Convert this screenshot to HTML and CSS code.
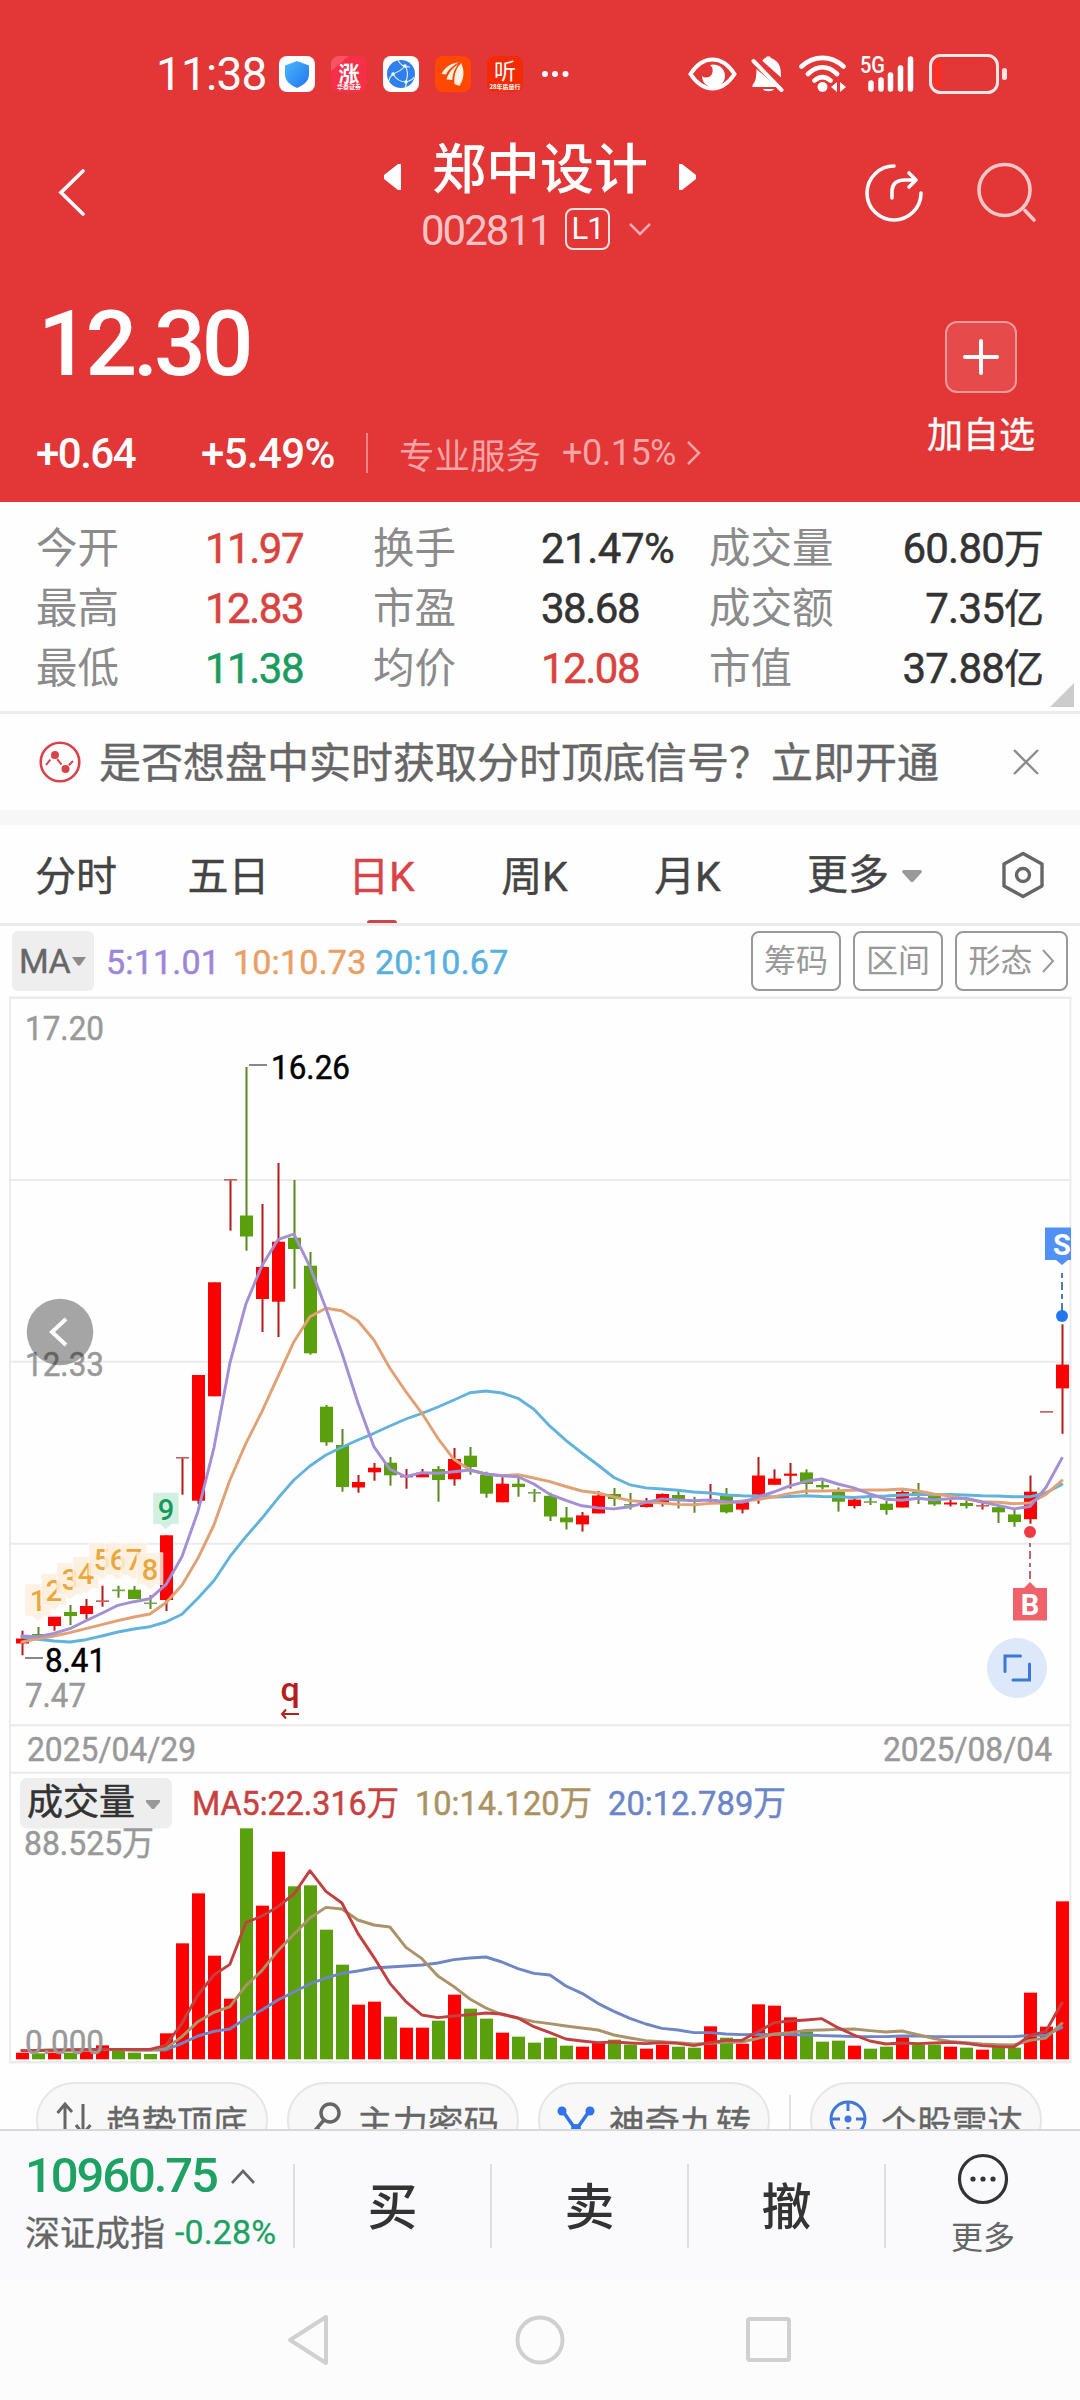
FILE: index.html
```html
<!DOCTYPE html>
<html lang="zh-CN">
<head>
<meta charset="utf-8">
<title>郑中设计 002811</title>
<link rel="stylesheet" href="styles.css">
</head>
<body>
<div class="screen">
  <header class="hero">
    <div class="status">
      <span class="clock">11:38</span>
      <div class="apps">
        <svg class="app" viewBox="0 0 36 36"><defs><linearGradient id="sh" x1="0" y1="0" x2="1" y2="1"><stop offset="0" stop-color="#4cb8f8"/><stop offset="1" stop-color="#1f74f2"/></linearGradient></defs><rect width="36" height="36" rx="8" fill="#fff"/><path d="M18 5 30 9.500V18c0 7-5 11-12 14C11 29 6 25 6 18V9.500Z" fill="url(#sh)"/></svg>
        <svg class="app" viewBox="0 0 36 36"><rect width="36" height="36" rx="8" fill="#f7304a"/><path d="M0 15V8a8 8 0 0 1 8-8h10Z" fill="#fa5265"/><text x="18" y="24.500" class="app-word" font-size="21" font-weight="700">涨</text><text x="18" y="33" class="app-word" font-size="6" font-weight="700">华泰证券</text></svg>
        <svg class="app" viewBox="0 0 36 36"><rect width="36" height="36" rx="8" fill="#fff"/><circle cx="18" cy="18" r="14" fill="#2f7fec"/><path d="M15 4C17 9 21 11 27 11M10 18C15 16 19 14 22 10M10 18C13 23 18 26 23 26M23 26C25 20 25 14 22 10M10 18C7 21 6 23 6 25M23 26C24 28 23 30 22 32M23 26C27 25 30 23 31 21" stroke="#d8ebff" stroke-width="1.200" fill="none"/><g fill="#fff"><circle cx="22" cy="10" r="1.700"/><circle cx="10" cy="18" r="1.700"/><circle cx="23" cy="26" r="1.700"/></g></svg>
        <svg class="app" viewBox="0 0 36 36"><rect width="36" height="36" rx="8" fill="#ff4800"/><path d="M6.500 18C10 11 16 7 24 6.500 17 10 13 14 11 18.500ZM11.500 23.500C14 15 18 9.500 25 6.500 20 13 18 18 17.500 24ZM19.500 28C18.500 20 21 12 26 6.500 30 15 29 23 24.500 30Z" fill="#fff1df"/><path d="M12 19.500C15 14 19 10 24 7M18 25.500C18 18 21 11 25.500 7" stroke="#ff4800" stroke-width="1.300" fill="none"/></svg>
        <svg class="app" viewBox="0 0 36 36"><rect width="36" height="36" rx="8" fill="#f32a06"/><text x="18" y="23" class="app-word" font-size="22">听</text><text x="18" y="32.500" class="app-word" font-size="6" font-weight="700">28年质量行</text></svg>
      </div>
      <svg class="dots" viewBox="0 0 28 8"><g fill="#fff"><circle cx="4" cy="4" r="3"/><circle cx="14" cy="4" r="3"/><circle cx="24.500" cy="4" r="3"/></g></svg>
      <div class="signals">
        <svg width="50" height="44" viewBox="689 51 50 44"><path d="M691.500 73C698 63 706 58.500 713.500 58.500S729 63 735.500 73C729 83 721 87.500 713.500 87.500S698 83 691.500 73Z" fill="none" stroke="#fff" stroke-width="4"/><path d="M711 64A11.500 11.500 0 1 1 703 75C706 77.500 711 77 713 73 714.500 69 713.500 66 711 64Z" fill="#fff"/></svg>
        <svg width="35" height="44" viewBox="752 51 35 44"><g fill="#fff"><path d="M764 58.500C766 57 767 57 767.500 55.500H771C771.500 57 773 57.500 775 58.500 781 62 782 67 782 76.500L763.500 60ZM757.500 68 778 86H753.500V84C756 81 757.500 78 757.500 68ZM764 88H775C774 91 765 91 764 88Z"/></g><path d="M754.500 60 782.500 89" stroke="#fff" stroke-width="4" stroke-linecap="round"/></svg>
        <svg width="48" height="44" viewBox="799 51 48 44"><g fill="none" stroke="#fff" stroke-width="4.600" stroke-linecap="round"><path d="M801.500 65.500C814 54 831 54 843.500 65.500M808 73C817 64 828 64 837 73M814.500 79.500C820 75 825 75 830.500 79.500"/></g><circle cx="822.500" cy="86" r="5" fill="#fff"/><path d="M837 81V91L831 86ZM840 81V91L846 86Z" fill="#fff"/></svg>
        <svg width="56" height="44" viewBox="860 51 56 44"><text x="860" y="72" textLength="25" lengthAdjust="spacingAndGlyphs" class="five-g">5G</text><path d="M871 82V88M881 79V88M890.500 74V88M900.500 67V88M910.500 58V88" stroke="#fff" stroke-width="5.500" stroke-linecap="round"/></svg>
        <svg width="80" height="44" viewBox="928 51 80 44"><rect x="929.500" y="54.500" width="67" height="37" rx="10" fill="none" stroke="#fff" stroke-opacity=".88" stroke-width="3"/><rect x="934" y="60" width="6" height="26" rx="2" fill="#ff2d20"/><rect x="1001" y="67" width="5" height="12" rx="2.500" fill="#fff" fill-opacity=".88"/></svg>
      </div>
    </div>

    <div class="titlebar">
      <svg class="back" viewBox="0 0 30 50"><path d="M26 3 4 24.500 26 46" fill="none" stroke="#fff" stroke-width="3.600" stroke-linecap="round"/></svg>
      <div class="heading">
        <div class="name-row">
          <svg width="20" height="28" viewBox="0 0 20 28"><path d="M18 1V27H15L1 16V12L15 1Z" fill="#fff"/></svg>
          <h1>郑中设计</h1>
          <svg width="20" height="28" viewBox="0 0 20 28"><path d="M2 1V27H5L19 16V12L5 1Z" fill="#fff"/></svg>
        </div>
        <div class="code-row">
          <span class="code">002811</span><span class="level">L1</span>
          <svg width="24" height="14" viewBox="0 0 24 14"><path d="M2 2 12 12 22 2" fill="none" stroke="#f7abac" stroke-width="2.500"/></svg>
        </div>
      </div>
      <svg class="share" viewBox="864 163 60 60"><g fill="none" stroke="#fff" stroke-width="3.600" stroke-linecap="round" stroke-linejoin="round"><path d="M894 166A27 27 0 1 0 921 193M892 198V190Q893 180 905 180H915M909 173 916 180 909 187"/></g></svg>
      <svg class="search" viewBox="974 160 66 66"><g fill="none" stroke="#fcc7c7" stroke-width="3.600" stroke-linecap="round"><circle cx="1004.500" cy="190" r="25.500"/><path d="M1025 210.500 1034 220"/></g></svg>
    </div>

    <div class="quote">
      <div class="quote-main">
        <div class="price">12.30</div>
        <div class="change-row">
          <span class="chg">+0.64</span><span class="pct">+5.49%</span><i class="rule"></i>
          <span class="sector">专业服务</span><span class="sector-pct">+0.15%</span>
          <svg width="16" height="26" viewBox="0 0 16 26"><path d="M2 2 13 13 2 24" fill="none" stroke="#f7a2a3" stroke-width="2.500"/></svg>
        </div>
      </div>
      <div class="add">
        <span class="add-box"><svg width="36" height="36" viewBox="0 0 36 36"><path d="M18 2V34M2 18H34" stroke="#fff" stroke-width="4" stroke-linecap="round"/></svg></span>
        <span class="add-label">加自选</span>
      </div>
    </div>
  </header>

  <section class="stats">
    <span>今开</span><b class="up">11.97</b><span>换手</span><b>21.47%</b><span>成交量</span><b class="end">60.80<em>万</em></b>
    <span>最高</span><b class="up">12.83</b><span>市盈</span><b>38.68</b><span>成交额</span><b class="end">7.35<em>亿</em></b>
    <span>最低</span><b class="down">11.38</b><span>均价</span><b class="up">12.08</b><span>市值</span><b class="end">37.88<em>亿</em></b>
    <i class="corner"></i>
  </section>

  <section class="notice">
    <svg width="42" height="42" viewBox="0 0 42 42"><circle cx="21" cy="21" r="19.300" fill="none" stroke="#d8434a" stroke-width="2.600"/><path d="M7 24 15 14 26 28 34 20" fill="none" stroke="#d8434a" stroke-width="2" stroke-dasharray="7 2"/><circle cx="16" cy="14" r="4" fill="#d8434a"/><circle cx="26.500" cy="28" r="4" fill="#d8434a"/></svg>
    <p>是否想盘中实时获取分时顶底信号？立即开通</p>
    <svg width="28" height="28" viewBox="0 0 28 28"><path d="M2 2 26 26M26 2 2 26" stroke="#8c8c8c" stroke-width="2.400"/></svg>
  </section>

  <nav class="tabs">
    <span>分时</span><span>五日</span><span class="on">日K</span><span>周K</span><span>月K</span>
    <span class="more">更多<svg width="22" height="14" viewBox="0 0 22 14"><path d="M2 1H20L21 3 12 13H10L1 3Z" fill="#999"/></svg></span>
    <svg class="hex" width="46" height="50" viewBox="1000 850 46 50"><path d="M1023 853.500 1042 864V886L1023 896.500 1004 886V864Z" fill="none" stroke="#666" stroke-width="3.400" stroke-linejoin="round"/><circle cx="1023" cy="875" r="6.500" fill="none" stroke="#666" stroke-width="3.400"/></svg>
  </nav>

  <div class="ma-bar">
    <span class="ma-pick">MA<svg width="14" height="10" viewBox="0 0 14 10"><path d="M0 1H14L8 9.500H6Z" fill="#8c8c8c"/></svg></span>
    <span class="ma5">5:11.01</span><span class="ma10">10:10.73</span><span class="ma20">20:10.67</span>
    <span class="tool push">筹码</span><span class="tool">区间</span><span class="tool wide">形态<svg width="14" height="26" viewBox="0 0 14 26"><path d="M2 2 12 13 2 24" fill="none" stroke="#999" stroke-width="2"/></svg></span>
  </div>

  <svg class="chart" id="chart" viewBox="0 996 1080 1070"></svg>

  <div class="chips">
    <span class="chip"><svg width="36" height="36" viewBox="0 0 36 36"><path d="M9 33V4M1.500 12 9 3 16 11M27 3V32M20 24 27 33 34.500 24" fill="none" stroke="#666" stroke-width="3"/></svg>趋势顶底</span>
    <span class="chip"><svg width="36" height="36" viewBox="0 0 36 36"><circle cx="23" cy="12" r="9" fill="none" stroke="#666" stroke-width="3.500"/><path d="M17 19 4 34M10 27 16 33" stroke="#666" stroke-width="3.500"/></svg>主力密码</span>
    <span class="chip"><svg width="38" height="36" viewBox="0 0 38 36"><path d="M5 9 19 29 33 9" fill="none" stroke="#2f74e8" stroke-width="3.500"/><g fill="#2f74e8"><circle cx="5" cy="10" r="4.500"/><circle cx="33" cy="10" r="4.500"/><circle cx="19" cy="28" r="5"/></g></svg>神奇九转</span>
    <i></i>
    <span class="chip"><svg width="38" height="38" viewBox="0 0 38 38"><circle cx="19" cy="19" r="17" fill="none" stroke="#3f78d8" stroke-width="3"/><circle cx="19" cy="19" r="3.500" fill="#3f78d8"/><path d="M19 2V11M19 27V36M2 19H11M27 19H36" stroke="#3f78d8" stroke-width="3"/></svg>个股雷达</span>
  </div>

  <footer class="trade">
    <div class="index">
      <div class="index-value">10960.75<svg width="26" height="18" viewBox="0 0 26 18"><path d="M2 16 13 4 24 16" fill="none" stroke="#666" stroke-width="2.600"/></svg></div>
      <div class="index-name">深证成指<span>-0.28%</span></div>
    </div>
    <button>买</button><button>卖</button><button>撤</button>
    <div class="more-act"><svg width="52" height="52" viewBox="0 0 52 52"><circle cx="26" cy="26" r="23.500" fill="none" stroke="#333" stroke-width="3.200"/><g fill="#333"><circle cx="16" cy="26" r="2.600"/><circle cx="26" cy="26" r="2.600"/><circle cx="36" cy="26" r="2.600"/></g></svg><span>更多</span></div>
  </footer>

  <div class="sysnav">
    <svg width="48" height="54" viewBox="0 0 48 54"><path d="M41 4 5 27 41 50Z" fill="none" stroke="#d0d0d0" stroke-width="4" stroke-linejoin="round"/></svg>
    <svg width="54" height="54" viewBox="0 0 54 54"><circle cx="27" cy="27" r="22.500" fill="none" stroke="#d0d0d0" stroke-width="4"/></svg>
    <svg width="54" height="54" viewBox="0 0 54 54"><rect x="6" y="6" width="41" height="41" rx="2" fill="none" stroke="#d0d0d0" stroke-width="4"/></svg>
  </div>
</div>
<script src="chart.js"></script>
</body>
</html>
```

FILE: styles.css
```css
* { box-sizing: border-box; }
body { margin: 0; background: #fff; font-family: Roboto, "Noto Sans CJK SC", sans-serif; }
svg { display: block; flex: none; }
h1, p { margin: 0; }
i, em { font-style: normal; }

.screen { width: 1080px; height: 2400px; overflow: hidden; display: flex; flex-direction: column; background: #fefefe; }
.screen > * { flex: none; }

.hero { height: 502px; background: #e23637; color: #fff; }

.status { height: 125px; padding: 22px 71px 0 156px; display: flex; align-items: center; }
.clock { width: 123px; font-size: 46px; letter-spacing: -.800px; }
.apps { display: flex; gap: 16px; }
.app { width: 36px; height: 36px; }
.app-word { fill: #fff; text-anchor: middle; font-family: "Noto Sans CJK SC", sans-serif; }
.dots { width: 28px; height: 8px; margin-left: 18px; }
.signals { margin-left: auto; display: flex; gap: 13px; }
.five-g { font-size: 24px; font-weight: 500; fill: #fff; }

.titlebar { height: 145px; padding-left: 57px; display: flex; }
.back { width: 30px; height: 50px; margin-top: 43px; }
.heading { width: 777px; padding: 13px 0 0 167px; display: flex; flex-direction: column; align-items: flex-start; }
.name-row { width: 314px; height: 66px; margin-left: 129px; display: flex; align-items: center; justify-content: space-between; }
.name-row svg { margin-top: 12px; }
.name-row h1 { font-size: 54px; line-height: 66px; font-weight: 500; }
.code-row { height: 50px; margin-left: 166px; display: flex; align-items: center; }
.code { width: 145px; padding: 2px 0 0 1px; font-size: 42px; letter-spacing: -2px; color: #fbc3c3; }
.level { width: 45px; height: 42px; margin-right: 18px; border: 2px solid #fde0e0; border-radius: 8px; font-size: 31px; line-height: 38px; letter-spacing: -1px; text-align: center; }
.share { width: 60px; height: 60px; margin-top: 38px; }
.search { width: 66px; height: 66px; margin: 35px 0 0 50px; }

.quote { height: 232px; display: flex; justify-content: space-between; padding: 0 41px 0 36px; }
.price { height: 142px; padding: 21px 0 0 2px; font-size: 91px; line-height: 106px; font-weight: 500; letter-spacing: -4.200px; }
.change-row { display: flex; align-items: center; height: 82px; }
.chg, .pct { font-size: 42px; letter-spacing: -1.500px; font-weight: 500; }
.chg { width: 165px; }
.pct { width: 165px; letter-spacing: -.600px; }
.rule { width: 2px; height: 40px; background: #ef8586; margin-right: 31px; }
.sector { width: 163px; font-size: 35.500px; color: #f9a4a5; }
.sector-pct { width: 124px; font-size: 36px; letter-spacing: -.500px; color: #f9a4a5; }
.add { width: 116px; display: flex; flex-direction: column; align-items: center; padding-top: 51px; }
.add-box { width: 72px; height: 72px; border: 2px solid #f19a9b; border-radius: 12px; background: #e64a4b; display: grid; place-items: center; }
.add-label { font-size: 36px; line-height: 50px; margin-top: 18px; white-space: nowrap; -webkit-text-stroke: .4px currentColor; }

.stats { position: relative; height: 212px; padding: 17px 36px 0; border-bottom: 3px solid #ececee; display: grid; grid-template-columns: 169px 168px 168px 168px 154px 1fr; grid-auto-rows: 60px; line-height: 60px; align-content: start; }
.stats span { font-size: 41.500px; color: #8b8b8b; }
.stats b { font-size: 42px; font-weight: 400; letter-spacing: -1.500px; color: #333; white-space: nowrap; -webkit-text-stroke: .5px currentColor; }
.stats b:nth-child(4) { letter-spacing: -.500px; }
.stats em { font-size: 40px; letter-spacing: 0; }
.stats .up { color: #d9433f; }
.stats .down { color: #1a9c60; }
.stats .end { text-align: right; letter-spacing: -.800px; }
.corner { position: absolute; right: 6px; bottom: 4px; border-left: 24px solid transparent; border-bottom: 24px solid #ccc; }

.notice { height: 111px; padding: 0 40px 15px 39px; display: flex; align-items: center; background: linear-gradient(#fefefe 96px, #f7f7f8 96px); }
.notice p { margin: 0 auto 0 18px; padding-top: 3px; font-size: 42px; line-height: 60px; color: #666; white-space: nowrap; -webkit-text-stroke: .4px currentColor; }

.tabs { height: 101px; padding-top: 3px; display: flex; align-items: center; border-bottom: 3px solid #ebebeb; color: #444; font-size: 41px; }
.tabs > span { width: 153px; height: 95px; line-height: 99px; text-align: center; -webkit-text-stroke: .4px currentColor; }
.tabs > span:first-child { width: 152px; }
.tabs .on { color: #dc4249; display: flex; flex-direction: column; align-items: center; }
.tabs .on::after { content: ""; width: 30px; height: 5px; border-radius: 3px 3px 0 0; background: #cf444b; margin-top: -7px; }
.tabs .more { width: 236px; display: flex; align-items: center; gap: 12px; padding-left: 43px; }
.tabs .hex { margin-bottom: 2px; }

.ma-bar { height: 70px; padding: 0 12px; display: flex; align-items: center; font-size: 34px; }
.ma-pick { width: 82px; height: 60px; border-radius: 6px; background: #eee; color: #666; display: flex; align-items: center; gap: 2px; padding-left: 7px; letter-spacing: -.500px; margin-right: 12px; -webkit-text-stroke: .4px currentColor; }
.ma5 { width: 127px; color: #9d86d8; }
.ma10 { width: 142px; color: #e8a064; }
.ma20 { color: #57b0de; }
.ma5, .ma10, .ma20 { padding-top: 2px; letter-spacing: .200px; -webkit-text-stroke: .5px currentColor; }
.tool { width: 90px; height: 60px; border: 2px solid #999; border-radius: 8px; color: #999; font-size: 32px; line-height: 50px; padding-bottom: 1px; display: flex; align-items: center; justify-content: center; margin-left: 12px; white-space: nowrap; }
.push { margin-left: auto; }
.wide { width: 113px; gap: 8px; }

.chart { width: 1080px; height: 1070px; }
.chart text { font-size: 34px; }
.chart .value { stroke-width: .5px; }
.chart .tag { font-size: 29px; font-weight: 500; text-anchor: middle; }
.chart .flag { font-size: 29px; font-weight: 700; text-anchor: middle; fill: #fff; }

.chips { height: 63px; padding: 16px 36px 0; display: flex; overflow: hidden; }
.chip { width: 232px; height: 76px; flex: none; border: 2px solid #e6e6e6; border-radius: 38px; background: #f8f8f8; color: #666; font-size: 35.500px; display: flex; align-items: center; justify-content: center; gap: 14px; margin-right: 19px; white-space: nowrap; -webkit-text-stroke: .3px currentColor; }
.chip:last-child { margin-right: 0; }
.chip svg { margin-top: -2px; }
.chips i { width: 2px; height: 60px; margin: 13px 19px 0 0; background: #e2e2e2; }

.trade { height: 151px; border-top: 2px solid #d8d8da; background: #fafafc; display: flex; align-items: center; }
.index { width: 293px; padding-left: 25px; }
.index-value { display: flex; align-items: center; gap: 13px; height: 60px; margin-top: -10px; font-size: 49px; font-weight: 500; letter-spacing: -2.100px; color: #1ea263; }
.index-name { display: flex; align-items: center; gap: 10px; height: 50px; font-size: 35px; color: #666; white-space: nowrap; -webkit-text-stroke: .3px currentColor; }
.index-name span { padding-top: 3px; font-size: 34px; letter-spacing: .100px; color: #1ea263; }
.trade button { width: 197px; height: 84px; padding: 0 0 6px; border: 0; border-left: 2px solid #dedee0; background: none; font: 500 50px/78px "Noto Sans CJK SC", sans-serif; color: #333; }
.more-act { width: 196px; height: 84px; border-left: 2px solid #dedee0; display: flex; flex-direction: column; align-items: center; justify-content: center; font-size: 32px; line-height: 40px; color: #666; gap: 13px; }

.sysnav { height: 120px; background: #fcfcfc; display: flex; align-items: center; justify-content: center; }
.sysnav svg:nth-child(1) { margin-right: 180px; }
.sysnav svg:nth-child(3) { margin-left: 175px; }
```

FILE: chart.js
```js
const RED = '#ff0000', GREEN = '#5aa00c';
const xAt = i => 22.5 + i * 16;

// [direction, high, low, body top, body bottom]
const candles = [
  ['r',1630.7,1655.3,1638.5,1643.5],['g',1627,1635.5,1634,1636],['r',1617,1630.7,1616.7,1626],['g',1605,1625,1612,1616],
  ['r',1599,1619,1606,1614],['r',1585.7,1606.7,1600.3,1602],['g',1585.7,1597.7,1589.5,1591.2],['g',1586,1599,1589.7,1599],
  ['g',1595,1609,1602.5,1604],['r',1535.3,1611,1535.3,1600],['r',1457.7,1494.7,1457,1458.6],['r',1375,1504,1375,1500.7],
  ['r',1282.3,1396.3,1282.3,1396.3],['r',1179.7,1230.7,1179,1180.6],['g',1067,1250.7,1215.5,1236.5],['r',1204,1332,1267,1299],
  ['r',1163,1337,1241.7,1301.7],['g',1180,1288.7,1237.7,1249],['g',1252,1354.7,1265.7,1353.3],['g',1405,1445.7,1406.7,1442.3],
  ['g',1429,1491.7,1445,1487],['r',1475,1492.7,1482,1487.5],['r',1463,1480.7,1467.7,1472.3],['g',1457,1485.7,1462.7,1475.3],
  ['r',1469,1488.7,1476,1477.5],['r',1469,1477,1472.7,1477.3],['g',1466,1501.7,1469,1480],['r',1448,1485.7,1459,1479.3],
  ['g',1447,1474.7,1455.7,1467],['g',1471.7,1497.7,1474.7,1493.7],['r',1476.7,1502.3,1483.7,1502.3],['g',1478,1496.7,1483.7,1487],
  ['g',1489,1502,1492,1493.6],['g',1492.7,1521,1495.8,1516.5],['g',1507,1529.5,1517.5,1522.3],['r',1512,1531.6,1515.4,1524.4],
  ['r',1491,1513.4,1495.5,1513.4],['g',1488,1506,1494,1499],['g',1493,1509.6,1504,1505.6],['r',1498,1507.5,1503,1507],
  ['r',1493.4,1506.5,1494,1503.7],['g',1491,1508.5,1495,1499],['g',1496.8,1512.7,1500.5,1502],['r',1484,1502,1499,1501],
  ['g',1488,1513.4,1496,1512.3],['r',1501.7,1513.4,1502.3,1509.6],['r',1457,1503.7,1475.5,1494.8],['r',1469.3,1484.8,1478.6,1484.8],
  ['r',1463,1488.6,1473.6,1475.8],['g',1469.3,1494,1472.4,1484],['g',1480.6,1489.3,1485,1487.3],['g',1487.5,1511.6,1492,1501.7],
  ['r',1498,1508.5,1499.6,1506],['g',1498,1505,1501.2,1502.8],['g',1501,1514.7,1503.7,1510],['r',1490,1507.5,1492,1507.5],
  ['g',1483,1504,1492,1495],['g',1495.5,1505.8,1496,1504.4],['r',1499.6,1506.5,1502.5,1504.5],['g',1500.3,1508.5,1503,1506],
  ['r',1502.3,1509.6,1505,1506.6],['g',1505.8,1523,1507.2,1512.3],['g',1510,1526.8,1514.4,1522],['r',1475.5,1523.7,1491.7,1519.2],
  ['r',1411.8,1411.8,1411,1412.7],['r',1324.3,1433.8,1364.6,1388.4]
];

const ma5 = [1636,1636.7,1633.3,1628.7,1620.7,1613.3,1605.3,1601.7,1598.7,1584.7,1556.7,1511.7,1448,1363,1304,1265.7,1239.7,1234,1266.7,1308.3,1353,1402.7,1446.7,1469.3,1476.7,1472.7,1473.3,1471.7,1470,1474,1475.7,1476.7,1484,1494.4,1500.3,1505.8,1507.9,1508.9,1506.8,1502.3,1498.9,1500,1500.6,1500,1501.7,1502.3,1496.8,1492,1485.8,1481.3,1479,1484,1487.9,1494,1499.2,1500.3,1498.2,1500,1498.6,1498.2,1502,1505.4,1508.9,1506.5,1487.5,1458.3];
const ma10 = [1642,1638.7,1636,1632.7,1628.7,1624.7,1620.7,1617,1614,1602.7,1585.3,1558.3,1525,1480,1443.3,1411.7,1376.7,1341.7,1316.7,1308.3,1310.7,1320.7,1340,1368.3,1391.7,1413.3,1438.3,1459.3,1470,1474,1475.7,1474.7,1478,1481.7,1486.5,1491,1493,1496.8,1500.6,1502,1503,1504.4,1504.8,1503.4,1503,1501,1499.6,1496.8,1493.4,1491,1491,1490.6,1490.3,1490,1490,1489,1491,1494,1496,1499,1501.7,1502.3,1503.7,1503,1494.4,1480.6];
const ma20 = [1637,1639.3,1641,1642,1639.7,1636,1632,1629,1626.7,1622,1614.3,1598.3,1580.7,1556.7,1536.7,1518.3,1498.3,1480,1466,1455,1447.3,1440,1433.3,1426,1419,1413.3,1407,1400,1392.7,1391,1393,1398.3,1409.3,1426.2,1440.4,1453,1465,1477.5,1484.8,1487.9,1489,1490.3,1492,1493,1495,1495.8,1496,1497,1496.5,1495.8,1496.5,1496.8,1497.5,1496.5,1496,1495,1494.4,1494.8,1494.4,1495,1495.8,1496,1496.8,1496.8,1492.7,1484.4];

// volume series, in thirds of a pixel below y = 1720
const vols = [998,1000,998,998,994,976,992,998,1002,940,670,520,707,836,325,557,395,499,496,629,734,854,845,890,923,923,902,824,866,896,938,950,968,953,977,980,968,959,974,986,974,980,983,919,953,971,853,857,892,934,965,962,977,986,980,952,974,974,980,983,989,980,983,818,920,544];
const v5 = [992,992,991,990,989,988,988,988,988,976,910,825,765,733,608,588,560,522,452,514,549,640,712,790,845,885,893,888,884,879,882,894,920,938,957,963,968,966,969,971,968,970,977,968,961,961,935,908,903,900,896,923,945,963,972,969,971,969,967,970,977,980,981,946,934,849];
const v10 = [991,991,990,990,990,989,989,990,990,985,950,905,877,860,797,752,692,643,594,562,567,600,615,621,682,716,768,800,837,864,884,894,905,911,918,924,930,945,954,962,965,968,972,970,967,966,955,942,938,931,930,928,927,932,936,933,944,956,964,968,972,974,975,961,954,910];
const v20 = [992,991,990,989,988,988,989,990,990,990,970,948,934,927,895,870,840,816,792,774,760,753,744,741,738,735,729,719,714,711,726,746,760,765,798,820,850,874,895,912,925,930,938,938,942,944,943,944,944,945,947,948,950,950,950,948,948,950,950,950,950,950,950,946,946,922];
const vy = v => 1720 + v / 3;

const out = [];
const rect = (x, y, w, h, fill, extra = '') => out.push(`<rect x="${x}" y="${y}" width="${w}" height="${h}" fill="${fill}" ${extra}/>`);
const line = (x1, y1, x2, y2, stroke, w = 2, extra = '') => out.push(`<path d="M${x1} ${y1}L${x2} ${y2}" stroke="${stroke}" stroke-width="${w}" ${extra}/>`);
const curve = (ys, stroke) => out.push(`<polyline points="${ys.map((y, i) => (xAt(i) - .6) + ',' + y).join(' ')}" fill="none" stroke="${stroke}" stroke-width="2.9" stroke-linejoin="round" stroke-linecap="round"/>`);
const label = (str, x, y, w, fill, size = 34) => out.push(`<text class="value" x="${x}" y="${y}" textLength="${w}" lengthAdjust="spacingAndGlyphs" fill="${fill}" stroke="${fill}" style="font-size:${size}px">${str}</text>`);

// frame and grid
rect(10, 997.5, 1060.5, 1065, '#fefefe', 'stroke="#ececec" stroke-width="2"');
[998, 1180, 1361.7, 1543.7, 1725.3, 1772.7, 2062].forEach(y => line(9, y, 1071, y, '#ebebeb'));

// axis labels below the candles
label('17.20', 25, 1040, 79, '#999');
label('12.33', 25, 1376, 79, '#999');
label('7.47', 25, 1707, 61, '#999');
label('2025/04/29', 27, 1761, 169, '#999');
label('2025/08/04', 883, 1761, 169, '#999');

candles.forEach(([c, hi, lo, top, bot], i) => {
  const x = xAt(i), flat = bot - top < 1.9;
  line(x, hi, x, lo, c === 'r' ? '#b51a1a' : '#578a20');
  rect(x - 6.5, top, 13, bot - top, flat ? (c === 'r' ? '#c8625f' : '#7aa24f') : (c === 'r' ? RED : GREEN));
});

// nine-turn counters
const tagTop = [0, 1584, 1573.3, 1562.7, 1556.7, 1543, 1543, 1543, 1552.7, 1492.3];
for (let n = 1; n <= 9; n++) {
  const x = xAt(n) - .6, y = tagTop[n], nine = n === 9;
  out.push(`<path d="M${x - 13} ${y}H${x + 13}V${y + 32}H${x + 6}L${x} ${y + 37}L${x - 6} ${y + 32}H${x - 13}Z" fill="${nine ? '#c9ecdb' : '#fdeedd'}" fill-opacity=".82" stroke="#fff" stroke-opacity=".6"/>`);
  out.push(`<text class="tag" x="${x}" y="${y + 27.3}" fill="${nine ? '#159a5c' : '#eba73c'}">${n}</text>`);
}

curve(ma20, '#62b3dc');
curve(ma10, '#e0a174');
curve(ma5, '#a28fd6');

line(249, 1065, 267, 1065, '#888');
label('16.26', 271, 1079, 79, '#000');
line(25, 1658, 43, 1658, '#888');
label('8.41', 45, 1672, 61, '#000');
out.push('<text x="290" y="1701" text-anchor="middle" fill="#b5201c" style="font-weight:500">q</text><path d="M299 1714H282M286 1709.500 282 1714 286 1718.500" fill="none" stroke="#b5201c" stroke-width="2"/>');

// previous-period button
out.push('<circle cx="60" cy="1332" r="33.300" fill="#000" fill-opacity=".35"/><path d="M66 1319 52 1332 66 1345" fill="none" stroke="#fff" stroke-width="4"/>');

// sell and buy markers
out.push('<path d="M1045 1227.500H1071V1260H1068L1062 1265 1056 1260H1045Z" fill="#5390f5"/><text class="flag" x="1062" y="1254.500">S</text>');
line(1062, 1273, 1062, 1311, '#4a7fae', 2, 'stroke-dasharray="5 4 8 4"');
out.push('<circle cx="1062" cy="1316" r="6" fill="#2277ee"/><circle cx="1030" cy="1532" r="6" fill="#ee3b43"/>');
line(1030, 1543, 1030, 1580, '#b86870', 2, 'stroke-dasharray="4 4 8 4"');
out.push('<path d="M1013 1588H1024L1030 1582 1036 1588H1047V1620.500H1013Z" fill="#ef626c"/><text class="flag" x="1030" y="1614.500">B</text>');
out.push('<circle cx="1017" cy="1668" r="30" fill="#dde8fb"/><path d="M1020.500 1656H1005V1671.500M1013 1680H1029.500V1664" fill="none" stroke="#3b78d8" stroke-width="3" stroke-linecap="round"/>');

// volume panel
vols.forEach((v, i) => rect(xAt(i) - 6.5, vy(v), 13, 2059.3 - vy(v), candles[i][0] === 'r' ? RED : GREEN));
curve(v20.map(vy), '#6f86c4');
curve(v10.map(vy), '#ab9268');
curve(v5.map(vy), '#c2403f');
rect(20, 1778, 152, 50.5, '#eee', 'rx="7"');
label('成交量', 27, 1815, 108, '#333', 36);
out.push('<path d="M146 1800H160V1802L154 1809H152L146 1802Z" fill="#999"/>');
label('MA5:22.316万', 192, 1815, 207, '#c8413e');
label('10:14.120万', 415, 1815, 177, '#ab9262');
label('20:12.789万', 608, 1815, 178, '#6c85c8');
label('88.525万', 24, 1855, 130, '#999');
label('0.000', 25, 2054, 79, '#999');

document.getElementById('chart').innerHTML = out.join('');
```
